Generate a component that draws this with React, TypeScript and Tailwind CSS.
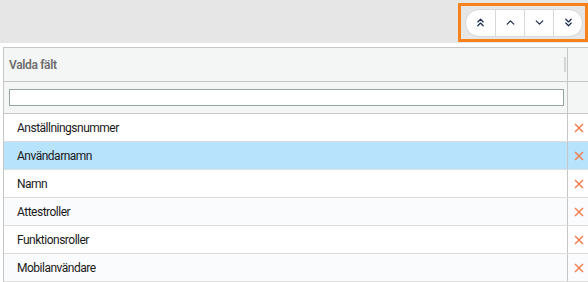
import { ChevronDown, ChevronUp, ChevronsDown, ChevronsUp } from "lucide-react";

const fields = [
	"Anställningsnummer",
	"Användarnamn",
	"Namn",
	"Attestroller",
	"Funktionsroller",
	"Mobilanvändare",
];

const selected = 1;

function RemoveIcon() {
	return (
		<svg width="10" height="10" viewBox="0 0 10 10" className="text-[#f2804f]">
			<path d="M1 1 L9 9 M9 1 L1 9" stroke="currentColor" strokeWidth="1.5" />
		</svg>
	);
}

export default function App() {
	const moveButtons = [ChevronsUp, ChevronUp, ChevronDown, ChevronsDown];

	return (
		<div className="w-[588px] h-[282px] overflow-hidden bg-white font-['Roboto',sans-serif] text-[12px]">
			<div className="h-[43px] bg-[#e6e6e6] flex justify-end items-start pt-[3px]">
				<div className="w-[130px] h-[39px] border-[3px] border-[#f7821b] flex items-center pl-[4px]">
					<div className="flex h-[28px] bg-white rounded-full border border-[#d8d8d8] overflow-hidden">
						{moveButtons.map((Icon, i) => (
							<button
								key={i}
								className={`w-[29px] flex items-center justify-center text-[#1f2d4d] ${i > 0 ? "border-l border-[#d8d8d8]" : ""}`}
							>
								<Icon size={13} strokeWidth={2.3} />
							</button>
						))}
					</div>
				</div>
			</div>

			<div className="mt-[4px] ml-[3px] w-[600px] border-t border-l border-[#c6c6c6]">
				<div className="flex h-[34px] bg-[#f4f5f5] border-b border-[#c6c6c6]">
					<div className="w-[563px] relative flex items-center pl-[5px] text-[12px] text-[#6d6d6d] font-semibold tracking-[-0.35px]">
						Valda fält
						<div className="absolute right-[1px] top-[9px] h-[15px] w-[2px] bg-[#d6d6d6]" />
					</div>
					<div className="flex-1 border-l border-[#c6c6c6]" />
				</div>
				<div className="flex h-[32px] bg-[#f4f5f5] border-b border-[#c6c6c6]">
					<div className="w-[563px] relative flex items-center pl-[5px] pr-[3px]">
						<input className="w-full h-[17px] bg-white border border-[#98a3a3] outline-none" />
					</div>
					<div className="flex-1 border-l border-[#c6c6c6]" />
				</div>
				{fields.map((name, i) => (
					<div
						key={name}
						className={`flex h-[28px] border-b border-[#dedede] ${i === selected ? "bg-[#b8e3fc]" : i % 2 === 1 ? "bg-[#fafbfd]" : "bg-white"}`}
					>
						<div className="w-[563px] flex items-center pl-[13px] text-[#1a1a1a] tracking-[-0.5px]">
							{name}
						</div>
						<div className="flex-1 border-l border-[#c6c6c6] flex items-center pl-[6px]">
							<RemoveIcon />
						</div>
					</div>
				))}
			</div>
		</div>
	);
}
